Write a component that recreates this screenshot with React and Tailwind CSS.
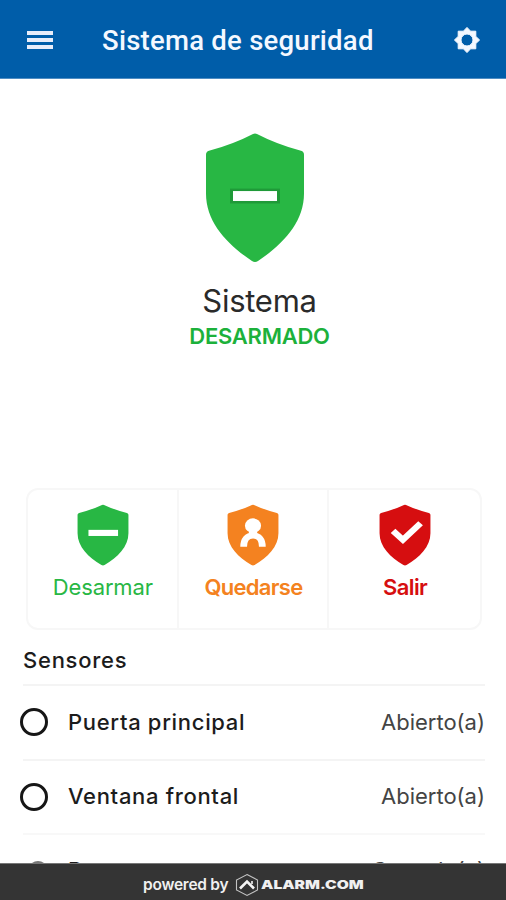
import React from 'react';

function Shield({ className, children }) {
  return (
    <svg viewBox="0 0 104 134" preserveAspectRatio="none" className={className}>
      <path
        d="M50 2 Q52 1 54 2 Q73 12 98 19 Q101 20 101 23 V62 C101 91 80 113 55 130 Q52 132 49 130 C24 113 3 91 3 62 V23 Q3 20 6 19 Q31 12 50 2 Z"
        fill="currentColor"
      />
      {children}
    </svg>
  );
}

function GearIcon() {
  return (
    <svg viewBox="0 0 28 28" className="h-7 w-7 text-[#f4f8ff]">
      <path
        d="M14 1.4 L17.6 5.2 L22.8 5.2 L22.8 10.4 L26.6 14 L22.8 17.6 L22.8 22.8 L17.6 22.8 L14 26.6 L10.4 22.8 L5.2 22.8 L5.2 17.6 L1.4 14 L5.2 10.4 L5.2 5.2 L10.4 5.2 Z M14 8 A6 6 0 1 0 14 20 A6 6 0 1 0 14 8 Z"
        fill="currentColor"
        fillRule="evenodd"
        stroke="currentColor"
        strokeWidth="1"
        strokeLinejoin="round"
      />
    </svg>
  );
}

function HexLogo() {
  return (
    <svg viewBox="0 0 26 24" className="ml-1 h-6 w-[26px] shrink-0" fill="none">
      <path d="M13 1.5 L23.5 7 V17 L13 22.5 L2.5 17 V7 Z" stroke="#c4c4c4" strokeWidth="1.1" />
      <path d="M6 15.5 L13 8.5 L20 15.5" stroke="#f5f5f5" strokeWidth="2.6" />
      <path d="M18 8 V11" stroke="#f5f5f5" strokeWidth="1.6" />
    </svg>
  );
}

const actions = [
  {
    label: 'Desarmar',
    color: 'text-[#28b744]',
    text: 'font-normal tracking-[-0.15px]',
    glyph: <rect x="24" y="55" width="57" height="13" fill="white" />,
  },
  {
    label: 'Quedarse',
    color: 'text-[#f48220]',
    text: 'font-semibold tracking-[-0.7px]',
    glyph: (
      <g>
        <circle cx="52" cy="46" r="15.5" fill="white" />
        <path d="M44 54 H60 V70 H44 Z" fill="white" />
        <path d="M34 91 C34 75 41 67 52 67 C63 67 70 75 70 91" fill="none" stroke="white" strokeWidth="13" />
      </g>
    ),
  },
  {
    label: 'Salir',
    color: 'text-[#d60e10]',
    text: 'font-semibold tracking-[-0.6px]',
    glyph: <path d="M29 57 L48 76 L82 41" fill="none" stroke="white" strokeWidth="12.5" />,
  },
];

const sensors = [
  { name: 'Puerta principal', state: 'Abierto(a)', row: 'h-[74.5px] border-[#f4f4f4]', ring: 'size-7 border-3 border-[#161616]' },
  { name: 'Ventana frontal', state: 'Abierto(a)', row: 'h-[74.5px] border-[#f4f4f4]', ring: 'size-7 border-3 border-[#161616]' },
  { name: 'Puerta trasera', state: 'Cerrado(a)', row: 'h-[73px] border-[#f8f8f8]', ring: 'ml-2 mr-1 size-5 border-2 border-[#777]' },
];

function App() {
  return (
    <div className="flex h-[900px] w-[506px] flex-col overflow-hidden bg-white font-[Inter,sans-serif]">
      <header className="flex h-[79px] shrink-0 items-center border-b border-[#4f8dc3] bg-[#005da9] pt-0.5 pr-[25px] pl-[27px]">
        <div className="flex w-[26px] flex-col gap-[3px]">
          <span className="h-1 bg-[#e8edfa]" />
          <span className="h-1 bg-[#e8edfa]" />
          <span className="h-1 bg-[#e8edfa]" />
        </div>
        <h1 className="ml-[49px] flex-1 pt-0.5 font-[Roboto,sans-serif] text-[27.5px] font-medium tracking-[0.25px] text-[#f4f8ff]">
          Sistema de seguridad
        </h1>
        <GearIcon />
      </header>

      <main className="flex min-h-0 flex-1 flex-col overflow-hidden">
        {/* System status */}
        <section className="flex h-[409px] shrink-0 flex-col items-center pt-[53px] pl-1">
          <Shield className="h-[133px] w-[104px] text-[#28b744]">
            <rect x="27" y="57" width="50" height="15" fill="#1f9a38" />
            <rect x="30" y="59.5" width="44" height="10" fill="white" />
          </Shield>
          <h2 className="mt-4 ml-[9px] text-[31px] leading-10 font-normal tracking-[-0.25px] text-[#2a2a2a]">Sistema</h2>
          <p className="mt-px ml-[9px] text-[22px] leading-7 font-semibold tracking-[-0.25px] text-[#1cb13b]">DESARMADO</p>
        </section>

        {/* Arming actions */}
        <section className="mr-6 ml-[26px] grid h-[142px] shrink-0 grid-cols-3 divide-x-2 divide-[#f7f7f7] rounded-xl border-2 border-[#f7f7f7]">
          {actions.map((action) => (
            <button key={action.label} className={`flex flex-col items-center pt-[14px] pl-px ${action.color}`}>
              <Shield className="h-[63px] w-[54px]">{action.glyph}</Shield>
              <span className={`mt-1.5 text-[22px] leading-7 ${action.text}`}>{action.label}</span>
            </button>
          ))}
        </section>

        {/* Sensor list */}
        <section className="flex flex-col pt-3 pr-[21px] pl-[23px] text-[#1c1c1c]">
          <h3 className="h-[42px] shrink-0 text-[22px] leading-9 font-medium tracking-[0.75px]">Sensores</h3>
          {sensors.map((sensor) => (
            <div key={sensor.name} className={`flex shrink-0 items-center border-t-2 ${sensor.row}`}>
              <span className="-ml-[3px] flex w-8 shrink-0">
                <span className={`rounded-full ${sensor.ring}`} />
              </span>
              <span className="ml-4 flex-1 text-[22px] font-medium tracking-[0.68px]">{sensor.name}</span>
              <span className="text-[22px] font-normal text-[#444]">{sensor.state}</span>
            </div>
          ))}
        </section>
      </main>

      <footer className="flex h-[37px] shrink-0 items-center border-t border-[#777] bg-[#343434] pt-1.5 pl-[143px] text-[#f0f0f0]">
        <span className="w-[87px] text-[15.5px] font-semibold tracking-[-0.25px] whitespace-nowrap">powered by</span>
        <HexLogo />
        <span className="ml-px w-[102px] origin-left scale-x-[1.3] text-[12px] font-black">ALARM.COM</span>
      </footer>
    </div>
  );
}

export default App;
